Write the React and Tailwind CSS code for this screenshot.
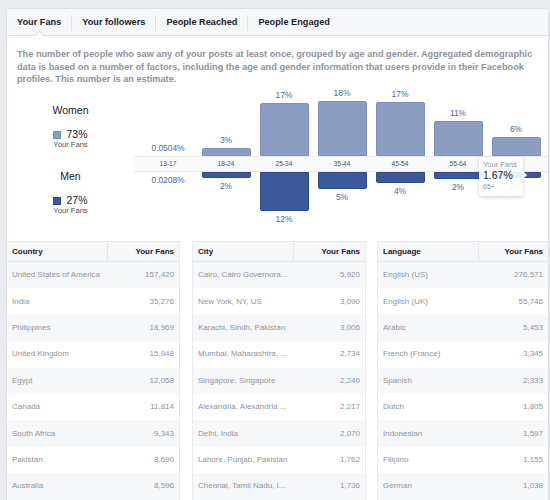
import React from 'react';

const ages = [
  { age: '13-17', w: 0, m: 0, wl: '0.0504%', ml: '0.0208%' },
  { age: '18-24', w: 8, m: 6, wl: '3%', ml: '2%' },
  { age: '25-34', w: 53, m: 39, wl: '17%', ml: '12%' },
  { age: '35-44', w: 55, m: 17, wl: '18%', ml: '5%' },
  { age: '45-54', w: 54, m: 11, wl: '17%', ml: '4%' },
  { age: '55-64', w: 35, m: 7, wl: '11%', ml: '2%' },
  { age: '65+', w: 19, m: 6, wl: '6%', ml: '2%' },
];

const tables = [
  {
    title: 'Country',
    rows: [
      ['United States of America', '157,420'],
      ['India', '35,276'],
      ['Philippines', '18,969'],
      ['United Kingdom', '15,948'],
      ['Egypt', '12,058'],
      ['Canada', '11,814'],
      ['South Africa', '9,343'],
      ['Pakistan', '8,690'],
      ['Australia', '8,596'],
    ],
  },
  {
    title: 'City',
    rows: [
      ['Cairo, Cairo Governora...', '5,920'],
      ['New York, NY, US', '3,090'],
      ['Karachi, Sindh, Pakistan', '3,006'],
      ['Mumbai, Maharashtra, ...', '2,734'],
      ['Singapore, Singapore', '2,240'],
      ['Alexandria, Alexandria ...', '2,217'],
      ['Delhi, India', '2,070'],
      ['Lahore, Punjab, Pakistan', '1,762'],
      ['Chennai, Tamil Nadu, I...', '1,736'],
    ],
  },
  {
    title: 'Language',
    rows: [
      ['English (US)', '276,571'],
      ['English (UK)', '55,746'],
      ['Arabic', '5,453'],
      ['French (France)', '3,345'],
      ['Spanish', '2,333'],
      ['Dutch', '1,805'],
      ['Indonesian', '1,597'],
      ['Filipino', '1,155'],
      ['German', '1,038'],
    ],
  },
];

const tabs = ['Your Fans', 'Your followers', 'People Reached', 'People Engaged'];

const Legend = ({ label, pct, color }) => (
  <div className="flex flex-col items-center">
    <div className="text-[10.5px] leading-[13px] text-[#1d2129]">{label}</div>
    <div className="mt-[12px] flex items-center gap-[5px] text-[10.5px] leading-[11px] text-[#1d2129]">
      <span className={`w-[8px] h-[8px] border ${color}`} />
      {pct}
    </div>
    <div className="text-[7.6px] leading-[9px] text-[#4b4f56]">Your Fans</div>
  </div>
);

const DataTable = ({ title, rows, className }) => (
  <div className={className}>
    <div className="flex h-[21px] bg-[#f5f6f7] border-t border-b border-[#e5e6e9] text-[8px] font-bold text-[#1d2129]">
      <div className="w-[100px] flex items-center pl-[5px]">{title}</div>
      <div className="flex-1 flex items-center justify-end pr-[5px] border-l border-[#e5e6e9]">Your Fans</div>
    </div>
    {rows.map((r, i) => (
      <div
        key={r[0]}
        className={`flex items-center justify-between h-[26.4px] px-[5px] text-[8px] text-[#90949c] ${i % 2 === 0 ? 'bg-[#f6f7f9]' : 'bg-white'}`}
      >
        <span className="whitespace-nowrap">{r[0]}</span>
        <span>{r[1]}</span>
      </div>
    ))}
  </div>
);

export default function App() {
  return (
    <div className="w-[550px] h-[500px] overflow-hidden bg-[#e9ebee] pl-[6px] pr-[1px] pt-[8px] font-['Liberation_Sans',Arial,sans-serif]">
      <div className="h-[510px] bg-white border border-[#dddfe2] rounded-t-[4px]">
        {/* tabs */}
        <div className="relative flex items-center h-[27px] pt-[2px] bg-[#f6f7f9] border-b border-[#dddfe2] rounded-t-[4px] text-[9.2px] font-bold text-[#1d2129]">
          {tabs.map((t, i) => (
            <React.Fragment key={t}>
              {i > 0 && <div className="w-px h-[16px] bg-[#dddfe2]" />}
              <div className="relative px-[10px] h-full flex items-center">
                {t}
                {i === 0 && (
                  <span className="absolute left-1/2 -bottom-[4px] -ml-[3px] w-[7px] h-[7px] rotate-45 bg-white border-l border-t border-[#dddfe2]" />
                )}
              </div>
            </React.Fragment>
          ))}
        </div>

        {/* description */}
        <div className="mt-[12px] h-[37px] px-[10px] text-[9.2px] leading-[12.5px] font-bold text-[#90949c]">
          The number of people who saw any of your posts at least once, grouped by age and gender. Aggregated demographic
          data is based on a number of factors, including the age and gender information that users provide in their Facebook
          profiles. This number is an estimate.
        </div>

        {/* chart */}
        <div className="flex h-[140px]">
          <div className="w-[127px] pt-[19px] flex flex-col gap-[21px]">
            <Legend label="Women" pct="73%" color="bg-[#8b9dc3] border-[#7b8eb9]" />
            <Legend label="Men" pct="27%" color="bg-[#3b5998] border-[#2f4c88]" />
          </div>
          <div className="relative flex-1 flex flex-col">
            <div className="flex h-[71px] pl-[5px]">
              {ages.map((a) => (
                <div key={a.age} className="w-[58px] flex flex-col items-center justify-end">
                  <div className="mb-[3px] text-[8.4px] leading-[10px] text-[#4b67a1]">{a.wl}</div>
                  {a.w > 0 && (
                    <div
                      className="w-[49px] bg-[#8b9dc3] border border-[#7d90ba] rounded-t-[2px]"
                      style={{ height: a.w }}
                    />
                  )}
                </div>
              ))}
            </div>
            <div className="flex h-[16px] pl-[5px] bg-[#f9fafb] border-y border-[#e9eaed] shadow-[0_1px_2px_rgba(0,0,0,0.04)]">
              {ages.map((a) => (
                <div key={a.age} className="w-[58px] flex items-center justify-center text-[6.6px] text-[#4b4f56]">
                  {a.age}
                </div>
              ))}
            </div>
            <div className="flex pl-[5px]">
              {ages.map((a) => (
                <div key={a.age} className="w-[58px] flex flex-col items-center">
                  {a.m > 0 && (
                    <div
                      className="w-[49px] bg-[#3b5998] border border-[#2f4c88] rounded-b-[2px]"
                      style={{ height: a.m }}
                    />
                  )}
                  <div className="mt-[3px] text-[8.4px] leading-[10px] text-[#4b67a1]">{a.ml}</div>
                </div>
              ))}
            </div>

            {/* tooltip */}
            <div className="absolute left-[345px] top-[72px] w-[44px] h-[39px] rounded-[3px] bg-white/90 shadow-[0_1px_4px_rgba(0,0,0,0.2)] px-[4px] pt-[3px] whitespace-nowrap">
              <div className="text-[7.5px] leading-[9px] text-[#90949c]">Your Fans</div>
              <div className="text-[10.5px] leading-[13px] text-[#1d2129]">1.67%</div>
              <div className="text-[7px] leading-[9px] text-[#90949c]">65+</div>
              <span className="absolute -right-[4px] top-[14px] w-0 h-0 border-y-[4px] border-y-transparent border-l-[4px] border-l-white" />
            </div>
          </div>
        </div>

        {/* tables */}
        <div className="flex pt-[16px]">
          <DataTable {...tables[0]} className="w-[173px] border-r border-[#e9ebee]" />
          <DataTable {...tables[1]} className="ml-[12px] w-[174px] border-x border-[#e9ebee]" />
          <DataTable {...tables[2]} className="ml-[11px] flex-1 border-l border-[#e9ebee]" />
        </div>
      </div>
    </div>
  );
}
